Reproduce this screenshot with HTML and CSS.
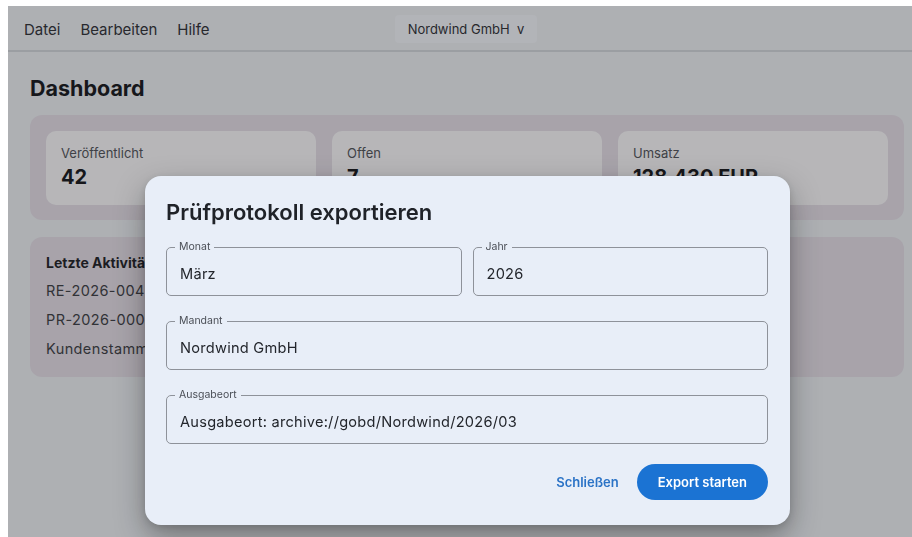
FILE: index.html
```html
<!DOCTYPE html>
<html lang="de">
<head>
<meta charset="utf-8">
<title>Dashboard – Nordwind GmbH</title>
<link rel="stylesheet" href="styles.css">
</head>
<body>
<div class="app">
  <header class="menubar">
    <nav class="menu">
      <span class="menu-item">Datei</span>
      <span class="menu-item">Bearbeiten</span>
      <span class="menu-item">Hilfe</span>
    </nav>
    <button class="tenant-switch" type="button">Nordwind GmbH&nbsp;&nbsp;v</button>
  </header>

  <main class="content">
    <h1 class="page-title">Dashboard</h1>

    <section class="stats">
      <div class="stat-card">
        <div class="stat-label">Veröffentlicht</div>
        <div class="stat-value">42</div>
      </div>
      <div class="stat-card">
        <div class="stat-label">Offen</div>
        <div class="stat-value">7</div>
      </div>
      <div class="stat-card">
        <div class="stat-label">Umsatz</div>
        <div class="stat-value">128.430 EUR</div>
      </div>
    </section>

    <section class="activity">
      <h2 class="activity-title">Letzte Aktivitäten</h2>
      <div class="activity-row">RE-2026-0042 veröffentlicht</div>
      <div class="activity-row">PR-2026-0007 erstellt</div>
      <div class="activity-row">Kundenstamm aktualisiert</div>
    </section>
  </main>
</div>

<div class="scrim">
  <div class="dialog" role="dialog" aria-labelledby="dlg-title">
    <h2 class="dialog-title" id="dlg-title">Prüfprotokoll exportieren</h2>

    <div class="field-row">
      <div class="field">
        <span class="field-label">Monat</span>
        <div class="field-value">März</div>
      </div>
      <div class="field">
        <span class="field-label">Jahr</span>
        <div class="field-value">2026</div>
      </div>
    </div>

    <div class="field">
      <span class="field-label">Mandant</span>
      <div class="field-value">Nordwind GmbH</div>
    </div>

    <div class="field">
      <span class="field-label">Ausgabeort</span>
      <div class="field-value">Ausgabeort: archive://gobd/Nordwind/2026/03</div>
    </div>

    <div class="dialog-actions">
      <button class="btn-text" type="button">Schließen</button>
      <button class="btn-primary" type="button">Export starten</button>
    </div>
  </div>
</div>
</body>
</html>
```

FILE: styles.css
```css
* {
  box-sizing: border-box;
}

html,
body {
  height: 100%;
}

body {
  margin: 6px 0 0 8px;
  background: #ffffff;
  font-family: Inter, "Noto Sans", "Liberation Sans", sans-serif;
  color: #202124;
  overflow: hidden;
}

/* ---------- application shell ---------- */

.app {
  height: calc(100vh - 6px);
  background: #eceef0;
  display: flex;
  flex-direction: column;
}

.menubar {
  height: 46px;
  flex: none;
  display: flex;
  align-items: center;
  padding: 2px 16px 0;
  border-bottom: 2px solid #d2d4d7;
}

.menu {
  display: flex;
  gap: 20px;
}

.menu-item {
  font-size: 15px;
  color: #2c2c30;
}

.tenant-switch {
  margin-left: 185px;
  height: 28px;
  padding: 0 13px;
  border: 0;
  border-radius: 4px;
  background: #f3f4f6;
  font-family: inherit;
  font-size: 13px;
  color: #2c2c30;
}

.content {
  flex: 1;
  padding: 23px 8px 0 22px;
}

.page-title {
  margin: 0;
  font-size: 21.5px;
  line-height: 26px;
  font-weight: 700;
  color: #141416;
}

/* ---------- KPI cards ---------- */

.stats {
  margin-top: 14px;
  padding: 16px 16px 15px;
  border-radius: 12px;
  background: #e4dce3;
  display: grid;
  grid-template-columns: repeat(3, 1fr);
  gap: 16px;
}

.stat-card {
  height: 74px;
  padding: 14px 15px 0;
  border-radius: 10px;
  background: #f9f7f7;
}

.stat-label {
  font-size: 13px;
  line-height: 17px;
  color: #4f5054;
}

.stat-value {
  margin-top: 3px;
  font-size: 20px;
  line-height: 24px;
  font-weight: 700;
  color: #141416;
}

/* ---------- activity list ---------- */

.activity {
  margin-top: 17px;
  height: 140px;
  padding: 16px 16px 0;
  border-radius: 12px;
  background: #e4dce3;
}

.activity-title {
  margin: 0 0 8px;
  font-size: 14px;
  line-height: 20px;
  font-weight: 700;
  color: #1c1c1f;
}

.activity-row {
  font-size: 14.5px;
  line-height: 20px;
  color: #3a3a3e;
  margin-bottom: 9px;
  letter-spacing: 0.4px;
}

/* ---------- modal ---------- */

.scrim {
  position: fixed;
  top: 6px;
  left: 8px;
  right: 0;
  bottom: 0;
  background: rgba(30, 34, 40, 0.3);
  padding: 170px 0 0 137px;
}

.dialog {
  width: 645px;
  padding: 23px 22px 25px 21px;
  border-radius: 16px;
  background: #e8eef8;
  box-shadow: 0 12px 30px rgba(0, 0, 0, 0.34), 0 2px 6px rgba(0, 0, 0, 0.12);
  display: flex;
  flex-direction: column;
  gap: 25px;
}

.dialog-title {
  margin: 0 0 -3px;
  font-size: 22px;
  line-height: 26px;
  font-weight: 600;
  color: #1f2228;
}

.field-row {
  display: grid;
  grid-template-columns: 1fr 1fr;
  gap: 11px;
}

.field {
  position: relative;
  height: 49px;
  padding: 16px 13px 0;
  border: 1px solid #8e929a;
  border-radius: 5px;
}

.field-label {
  position: absolute;
  top: -7px;
  left: 8px;
  padding: 0 4px;
  background: #e8eef8;
  font-size: 10.5px;
  line-height: 12px;
  color: #4b4f57;
}

.field-value {
  font-size: 14.6px;
  line-height: 20px;
  letter-spacing: 0.25px;
  color: #23262c;
}

.dialog-actions {
  margin-top: -5px;
  display: flex;
  justify-content: flex-end;
  align-items: center;
  gap: 8px;
}

.btn-text {
  height: 36px;
  padding: 0 10px;
  border: 0;
  background: transparent;
  font-family: inherit;
  font-size: 13px;
  font-weight: 600;
  color: #2b73c6;
}

.btn-primary {
  height: 36px;
  padding: 0 21px;
  border: 0;
  border-radius: 18px;
  background: #1b73d3;
  font-family: inherit;
  font-size: 13px;
  font-weight: 600;
  color: #ffffff;
}
```
